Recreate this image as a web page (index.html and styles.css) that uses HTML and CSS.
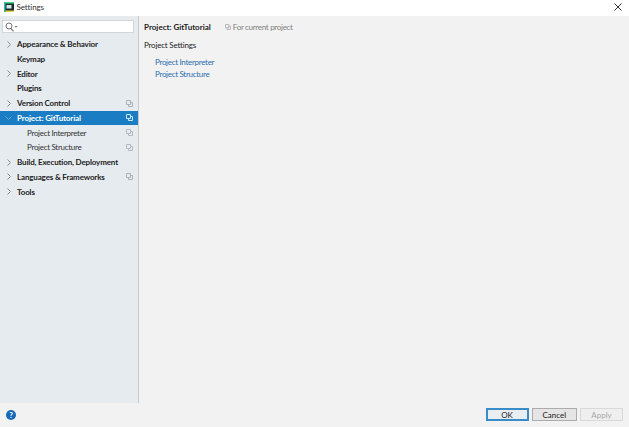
FILE: index.html
```html
<!DOCTYPE html>
<html lang="en">
<head>
<meta charset="utf-8">
<title>Settings</title>
<link rel="stylesheet" href="styles.css">
</head>
<body>
<div class="window">
  <header class="titlebar">
    <svg class="app-icon" width="10" height="10" viewBox="0 0 10 10"><rect width="10" height="10" fill="#1d2b2b"/><path d="M0 0h10v1.500H0z" fill="#3ddc84"/><path d="M0 0h1.500v10H0z" fill="#2fb8a8"/><path d="M1.500 8.500h8.500V10H1.500z" fill="#e8d44d"/><rect x="2.500" y="3" width="5" height="3.500" fill="#cfe8e0"/></svg>
    <span class="title">Settings</span>
    <svg class="close" width="8" height="8" viewBox="0 0 8 8"><path d="M.5.5l7 7M7.500.5l-7 7" stroke="#333" stroke-width="1" fill="none"/></svg>
  </header>
  <div class="main">
    <aside class="sidebar">
      <div class="search">
        <svg width="13" height="10" viewBox="0 0 13 10"><circle cx="4" cy="4" r="3" fill="none" stroke="#777" stroke-width="1"/><path d="M6 6.300l2.500 3" stroke="#777" stroke-width="1.200"/><path d="M9.500 4h3l-1.500 1.800z" fill="#777"/></svg>
      </div>
      <ul class="tree">
        <li class="row"><svg class="chev" width="4" height="7" viewBox="0 0 4 7"><path d="M.5.500l3 3-3 3" fill="none" stroke="#8a8f94"/></svg><span class="label">Appearance &amp; Behavior</span></li>
        <li class="row nochev"><span class="label">Keymap</span></li>
        <li class="row"><svg class="chev" width="4" height="7" viewBox="0 0 4 7"><path d="M.5.500l3 3-3 3" fill="none" stroke="#8a8f94"/></svg><span class="label">Editor</span></li>
        <li class="row nochev"><span class="label">Plugins</span></li>
        <li class="row"><svg class="chev" width="4" height="7" viewBox="0 0 4 7"><path d="M.5.500l3 3-3 3" fill="none" stroke="#8a8f94"/></svg><span class="label">Version Control</span><svg class="copy" width="7" height="7" viewBox="0 0 7 7"><path d="M.5.500h4v4h-4zM2.500 4.500v2h4v-4h-2" fill="none" stroke="#aab2ba"/></svg></li>
        <li class="row selected"><svg class="chev" width="7" height="4" viewBox="0 0 7 4"><path d="M.5.500l3 3 3-3" fill="none" stroke="#5fa8df"/></svg><span class="label">Project: GitTutorial</span><svg class="copy" width="7" height="7" viewBox="0 0 7 7"><path d="M.5.500h4v4h-4zM2.500 4.500v2h4v-4h-2" fill="none" stroke="#cfe4f5"/></svg></li>
        <li class="row child"><span class="label">Project Interpreter</span><svg class="copy" width="7" height="7" viewBox="0 0 7 7"><path d="M.5.500h4v4h-4zM2.500 4.500v2h4v-4h-2" fill="none" stroke="#b4bbc2"/></svg></li>
        <li class="row child"><span class="label">Project Structure</span><svg class="copy" width="7" height="7" viewBox="0 0 7 7"><path d="M.5.500h4v4h-4zM2.500 4.500v2h4v-4h-2" fill="none" stroke="#b4bbc2"/></svg></li>
        <li class="row"><svg class="chev" width="4" height="7" viewBox="0 0 4 7"><path d="M.5.500l3 3-3 3" fill="none" stroke="#8a8f94"/></svg><span class="label">Build, Execution, Deployment</span></li>
        <li class="row"><svg class="chev" width="4" height="7" viewBox="0 0 4 7"><path d="M.5.500l3 3-3 3" fill="none" stroke="#8a8f94"/></svg><span class="label">Languages &amp; Frameworks</span><svg class="copy" width="7" height="7" viewBox="0 0 7 7"><path d="M.5.500h4v4h-4zM2.500 4.500v2h4v-4h-2" fill="none" stroke="#aab2ba"/></svg></li>
        <li class="row"><svg class="chev" width="4" height="7" viewBox="0 0 4 7"><path d="M.5.500l3 3-3 3" fill="none" stroke="#8a8f94"/></svg><span class="label">Tools</span></li>
      </ul>
    </aside>
    <section class="content">
      <div class="crumb">
        <span class="crumb-title">Project: GitTutorial</span>
        <svg class="copy-small" width="6" height="6" viewBox="0 0 7 7"><path d="M.5.500h4v4h-4zM2.500 4.500v2h4v-4h-2" fill="none" stroke="#a8b0b8"/></svg>
        <span class="crumb-note">For current project</span>
      </div>
      <h2 class="heading">Project Settings</h2>
      <div class="links">
        <a class="link">Project Interpreter</a>
        <a class="link">Project Structure</a>
      </div>
    </section>
  </div>
  <footer class="footer">
    <span class="help">?</span>
    <div class="buttons">
      <button class="btn default">OK</button>
      <button class="btn">Cancel</button>
      <button class="btn disabled">Apply</button>
    </div>
  </footer>
</div>
</body>
</html>
```
FILE: styles.css
```css
* { box-sizing: border-box; }
html, body { margin: 0; padding: 0; }
body {
  width: 629px;
  height: 427px;
  overflow: hidden;
  font-family: Lato, "Liberation Sans", sans-serif;
  font-size: 8px;
  color: #1f1f1f;
  background: #f2f2f2;
}
.window { display: flex; flex-direction: column; height: 427px; }
.titlebar {
  height: 16px;
  background: #fff;
  display: flex;
  align-items: center;
  padding: 0 7px 3px 4px;
  flex: none;
}
.app-icon { margin-right: 2.500px; }
.title { color: #333; letter-spacing: -0.1px; }
.close { margin-left: auto; }
.main { display: flex; height: 387px; flex: none; }
.sidebar {
  width: 139px;
  flex: none;
  background: #e6ebf0;
  border-right: 1px solid #c8cacc;
  padding-top: 4px;
}
.search {
  width: 132px;
  height: 13px;
  margin-left: 2px;
  background: #fff;
  border: 1px solid #d3d6d9;
  display: flex;
  align-items: center;
  padding-left: 2px;
}
.tree {
  list-style: none;
  margin: 0;
  padding: 0;
  margin-top: 3.75px;
  display: grid;
  grid-auto-rows: 14.75px;
}
.row {
  display: flex;
  align-items: center;
  padding: 0 5.500px 0 7px;
  font-weight: 700;
  letter-spacing: -0.15px;
  color: #222;
}
.chev { margin-right: 6px; flex: none; }
.nochev .label { margin-left: 10px; }
.selected { background: #1a7dc4; color: #fff; }
.selected .chev { margin-left: -2px; margin-right: 5px; }
.child { font-weight: 400; padding-left: 27px; letter-spacing: -0.3px; color: #333; }
.copy { margin-left: auto; flex: none; }
.content { flex: 1; padding: 6px 6px 0 5px; }
.crumb { display: flex; align-items: center; height: 10px; }
.crumb-title { font-weight: 700; color: #222; }
.copy-small { margin-left: 14px; margin-right: 2px; }
.crumb-note { color: #808080; letter-spacing: -0.3px; }
.heading {
  margin: 8px 0 0;
  font-size: 8px;
  font-weight: 400;
  line-height: 10px;
  letter-spacing: -0.2px;
  color: #222;
}
.links {
  display: flex;
  flex-direction: column;
  gap: 1.500px;
  margin: 7px 0 0 11px;
}
.link { color: #2a6fb0; line-height: 10.500px; letter-spacing: -0.3px; }
.footer {
  flex: 1;
  display: flex;
  align-items: center;
  justify-content: space-between;
  padding: 0 6px 1px 6px;
}
.help {
  width: 10px;
  height: 10px;
  border-radius: 50%;
  background: #1569b8;
  color: #fff;
  font-size: 8px;
  font-weight: 700;
  line-height: 10px;
  text-align: center;
}
.buttons { display: flex; gap: 3.500px; }
.btn {
  width: 44.500px;
  height: 13.500px;
  padding: 0;
  border: 1px solid #acacac;
  background: #e5e5e5;
  font: 400 8px Lato, "Liberation Sans", sans-serif;
  color: #222;
}
.btn.default { width: 43px; border: 2px solid #3a8cc8; background: #e8eef2; }
.btn.disabled { width: 43px; background: #efefef; border-color: #d9d9d9; color: #a8a8a8; }
```
